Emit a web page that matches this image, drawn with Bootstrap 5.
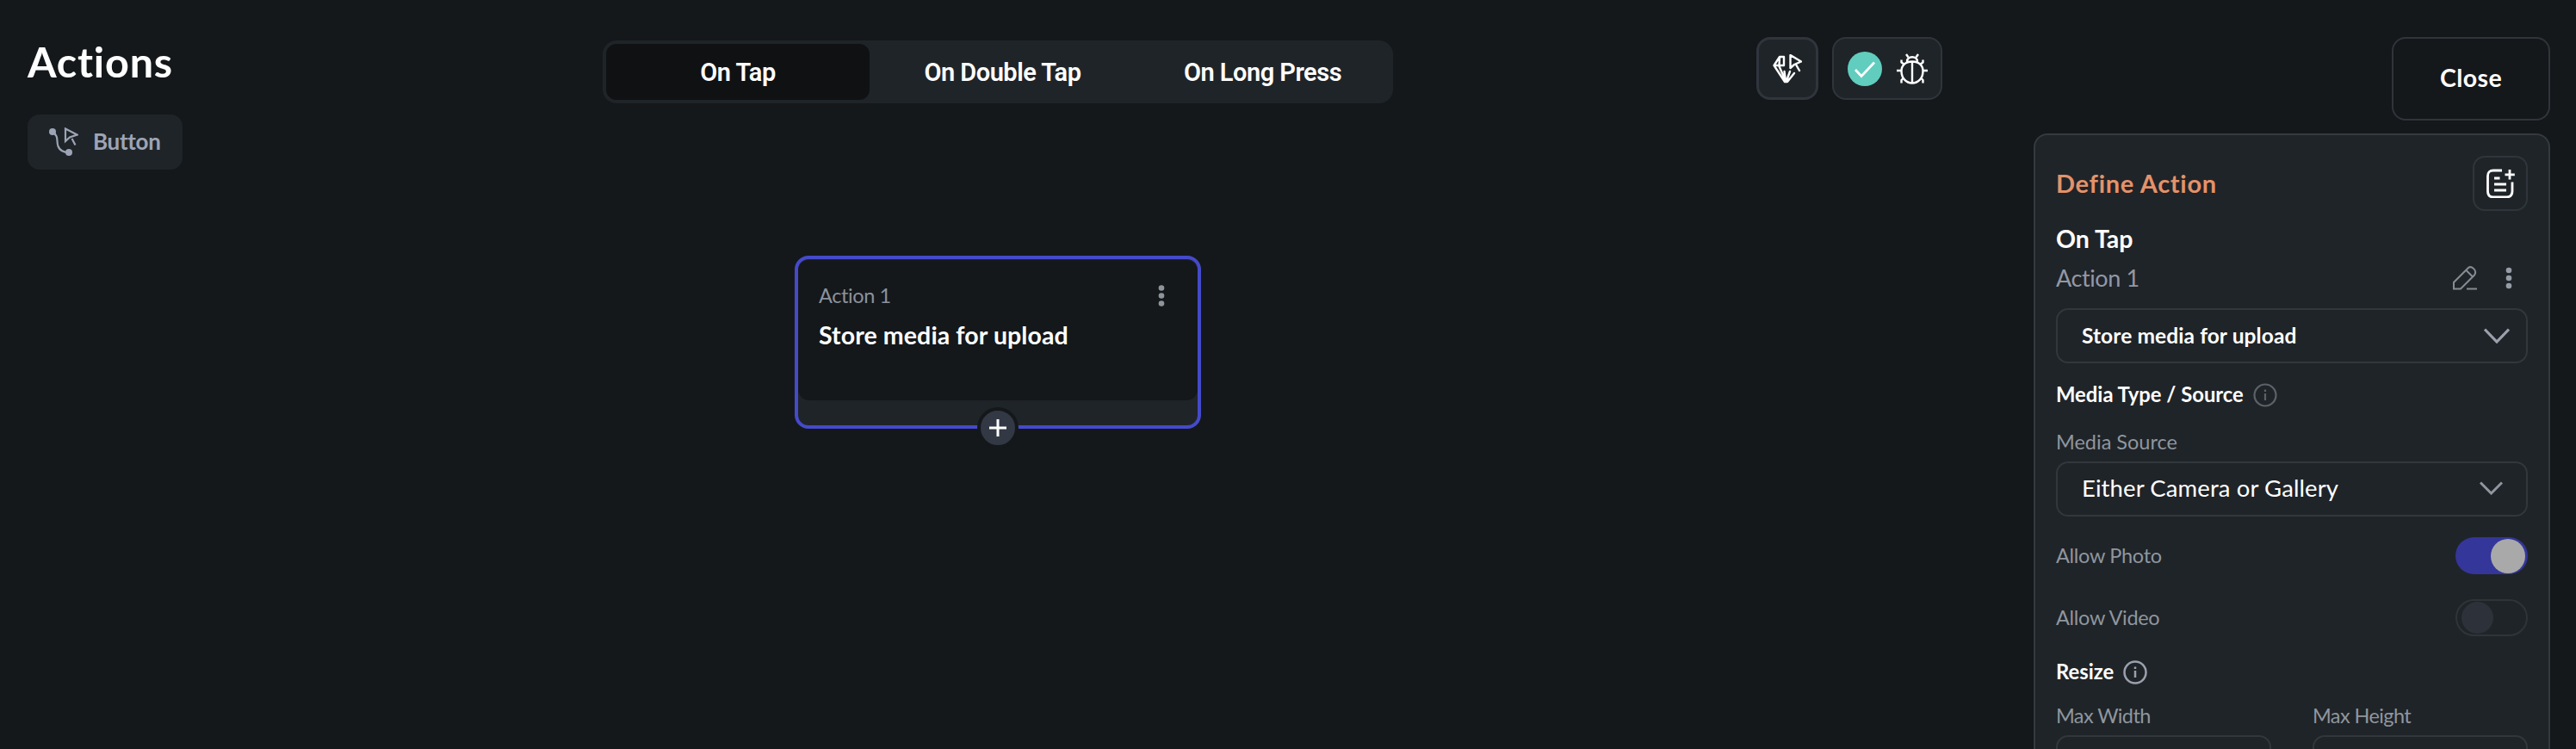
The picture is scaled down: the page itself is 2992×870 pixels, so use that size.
<!DOCTYPE html>
<html lang="en" data-bs-theme="dark">

<head>
    <meta charset="UTF-8">
    <meta name="viewport" content="width=device-width, initial-scale=1">
    <title>Actions</title>

    <!-- Bootstrap 5 -->
    <link href="https://cdn.jsdelivr.net/npm/bootstrap@5.3.0/dist/css/bootstrap.min.css" rel="stylesheet">
    <script src="https://cdn.jsdelivr.net/npm/bootstrap@5.3.0/dist/js/bootstrap.bundle.min.js"></script>

    <style>
        body {
            font-family: Lato, "Open Sans", sans-serif;
            background: #14181b;
            color: #fff;
            height: 870px;
            overflow: hidden;
        }

        svg {
            display: block;
            flex: none;
        }

        /* Main area */
        .workspace {
            width: 2318px;
        }

        .topbar {
            display: grid;
            grid-template-columns: 1fr 918px 1fr;
            height: 297px;
        }

        .page-title {
            margin: 46px 0 0 32px;
            font-size: 48.5px;
            line-height: 50px;
            font-weight: 700;
            letter-spacing: 0.8px;
        }

        .widget-chip {
            width: 180px;
            height: 64px;
            margin: 37px 0 0 32px;
            padding: 0 0 1px 25px;
            gap: 17px;
            border-radius: 14px;
            background: #1f2428;
            color: #9da4b6;
            font-size: 26px;
            font-weight: 700;
            letter-spacing: -0.3px;
        }

        .trigger-tabs {
            height: 73px;
            margin-top: 47px;
            padding: 4px;
            border-radius: 16px;
            background: #1f2428;
            font-family: Roboto, sans-serif;
            font-size: 29px;
            font-weight: 600;
            letter-spacing: -0.5px;
        }

        .trigger-tabs .nav-link {
            width: 309px;
            padding: 2px 0 0;
            border-radius: 12px;
            color: #fff;
        }

        .trigger-tabs .nav-link.active {
            width: 306px;
            background: #101113;
        }

        .trigger-tabs .nav-link:last-child {
            width: 295px;
        }

        .tools {
            margin: 43px 62px 0 0;
            gap: 16px;
        }

        .tool-box {
            height: 73px;
            border: 3px solid #30353d;
            border-radius: 16px;
            background: #1f2428;
        }

        .tool-box.single {
            width: 72px;
        }

        .tool-box.double {
            width: 128px;
            gap: 17px;
            border-width: 2px;
        }

        /* Action node */
        .action-node {
            width: 472px;
            height: 201px;
            border: 4px solid #454acb;
            border-radius: 16px;
            background: #1f2428;
        }

        .node-body {
            height: 163px;
            margin-top: 1px;
            padding: 23px 38px 0 24px;
            border-radius: 13px;
            background: #14181b;
        }

        .node-label {
            font-size: 23.5px;
            line-height: 37px;
            letter-spacing: -0.4px;
            color: #8b929b;
        }

        .node-name {
            font-size: 28.5px;
            line-height: 40px;
            margin-top: 7px;
            font-weight: 700;
            letter-spacing: 0.1px;
        }

        .add-node {
            left: 208px;
            top: 172px;
            width: 48px;
            height: 48px;
            border: 4px solid #14181b;
            border-radius: 50%;
            background: #323844;
        }

        /* Side panel */
        .side {
            width: 600px;
            margin-left: 44px;
        }

        .close-btn {
            flex: none;
            width: 184px;
            height: 97px;
            margin-top: 43px;
            padding: 0 0 2px;
            border: 2px solid #30353b;
            border-radius: 16px;
            font-size: 28.5px;
            font-weight: 700;
            letter-spacing: 0.4px;
            color: #fff;
        }

        .panel {
            flex: none;
            height: 715px;
            margin-top: 15px;
            padding: 24px 24px 0;
            border: 2px solid #353a3f;
            border-bottom: 0;
            border-radius: 16px 16px 0 0;
            background: #1f2428;
            overflow: hidden;
        }

        .panel-title {
            font-size: 29px;
            font-weight: 700;
            letter-spacing: 0.7px;
            color: #e4926a;
        }

        .add-doc {
            width: 64px;
            height: 64px;
            border: 2px solid #30353b;
            border-radius: 14px;
        }

        .trigger-name {
            margin-top: 10px;
            font-size: 28.5px;
            line-height: 45px;
            padding-bottom: 1px;
            font-weight: 700;
        }

        .action-name {
            height: 44px;
            padding-right: 18px;
            gap: 33px;
            font-size: 27px;
            letter-spacing: -0.4px;
            color: #9298a6;
        }

        .picker {
            height: 64px;
            padding: 0 19px 2px 28px;
            border: 2px solid #32373c;
            border-radius: 14px;
        }

        .action-picker {
            margin-top: 13px;
            padding-bottom: 0;
            font-size: 24.5px;
            font-weight: 700;
            letter-spacing: 0.1px;
        }

        .source-picker {
            margin-top: 7px;
            padding-right: 27px;
            font-size: 27.5px;
            letter-spacing: 0.1px;
        }

        .group-name {
            height: 40px;
            margin-top: 17px;
            padding-bottom: 1px;
            gap: 11px;
            font-size: 23.8px;
            font-weight: 700;
        }

        .field-name {
            font-size: 23.5px;
            line-height: 29px;
            padding-bottom: 1px;
            color: #8f969f;
        }

        .switch-row {
            height: 44px;
            letter-spacing: -0.3px;
        }

        .toggle {
            width: 84px;
            height: 43px;
            padding: 1px 3px;
            border-radius: 22px;
        }

        .toggle.on {
            background: #34369a;
        }

        .toggle.off {
            padding: 0 5px;
            border: 2px solid #2f3439;
        }

        .knob {
            width: 40px;
            height: 40px;
            border-radius: 50%;
            background: #a9a9a9;
        }

        .off .knob {
            width: 37px;
            height: 37px;
            background: #2d323a;
        }

        .size-label {
            letter-spacing: -0.6px;
        }

        .size-box {
            width: 250px;
            height: 64px;
            margin-top: 7px;
            border: 2px solid #32373c;
            border-radius: 14px;
        }
    </style>
</head>

<body class="d-flex">
    <main class="workspace">
        <div class="topbar">
            <div>
                <h1 class="page-title">Actions</h1>
                <div class="widget-chip d-flex align-items-center">
                    <svg width="34" height="34" viewBox="0 0 34 34" fill="none" stroke="#9da4b6" stroke-width="2.200">
                        <circle cx="4" cy="5" r="4" fill="#9da4b6" stroke="none"/>
                        <circle cx="23" cy="29" r="4" fill="#9da4b6" stroke="none"/>
                        <path d="M4 5C12 11 8 15 10.500 22C12.500 27 17 29 23 29M19 1.500V16L24 11.500L32.500 8.500ZM26.500 13L30.500 20.500"/>
                    </svg>
                    <span>Button</span>
                </div>
            </div>

            <nav class="trigger-tabs nav flex-nowrap">
                <a class="nav-link active d-flex align-items-center justify-content-center">On Tap</a>
                <a class="nav-link d-flex align-items-center justify-content-center">On Double Tap</a>
                <a class="nav-link d-flex align-items-center justify-content-center">On Long Press</a>
            </nav>

            <div class="tools d-flex justify-content-end">
                <div class="tool-box single d-flex align-items-center justify-content-center">
                    <svg width="34" height="34" viewBox="0 0 34 34" fill="none" stroke="#fff" stroke-width="2.400" stroke-linejoin="round" stroke-linecap="round">
                        <path d="M13 3H8L1.500 13L14 32H17L25 22M13 3V13M8 3.500L7.500 13M1.500 13H13M7.500 14L15 31L13.500 20M16 31L20 20"/>
                        <path d="M20.500 1V16L25 12L33 8.500ZM27 12L31 19"/>
                    </svg>
                </div>
                <div class="tool-box double d-flex align-items-center justify-content-center">
                    <svg width="40" height="40" viewBox="0 0 40 40" fill="none">
                        <circle cx="20" cy="20" r="20" fill="#61cdbe"/>
                        <path d="M9 21L16 28.500L31 12.500" stroke="#fff" stroke-width="2.800"/>
                    </svg>
                    <svg width="36" height="36" viewBox="0 0 36 36" fill="none" stroke="#fff" stroke-width="2.400" stroke-linejoin="round">
                        <path d="M18 9.500C26 9.500 30.500 14 30.500 20.500C30.500 29 25 34.500 18 34.500S5.500 29 5.500 20.500C5.500 14 10 9.500 18 9.500ZM18 9.500V34M12 9.500C12 2.500 24 2.500 24 9.500"/>
                        <path d="M13.500 4.500L11 1M22.500 4.500L25 1M8.500 12.500L5.500 10.500V7.500M27.500 12.500L30.500 10.500V7.500M5.500 20H0M30.500 20H36M8 28.500L5.500 31V34.500M28 28.500L30.500 31V34.500"/>
                    </svg>
                </div>
            </div>
        </div>

        <div class="d-flex justify-content-center">
            <div class="action-node position-relative">
                <div class="node-body d-flex justify-content-between">
                    <div>
                        <div class="node-label">Action 1</div>
                        <div class="node-name">Store media for upload</div>
                    </div>
                    <svg width="8" height="36" viewBox="0 0 8 36" fill="#8f949b">
                        <circle cx="4" cy="9.500" r="3.300"/>
                        <circle cx="4" cy="18.500" r="3.300"/>
                        <circle cx="4" cy="27.500" r="3.300"/>
                    </svg>
                </div>
                <div class="add-node position-absolute d-flex align-items-center justify-content-center">
                    <svg width="20" height="20" viewBox="0 0 20 20" stroke="#fff" stroke-width="3">
                        <path d="M10 0V20M0 10H20"/>
                    </svg>
                </div>
            </div>
        </div>
    </main>

    <aside class="side d-flex flex-column">
        <button class="close-btn btn align-self-end">Close</button>

        <section class="panel">
            <div class="d-flex align-items-center justify-content-between">
                <div class="panel-title">Define Action</div>
                <div class="add-doc d-flex align-items-center justify-content-center">
                    <svg width="34" height="34" viewBox="0 0 34 34" fill="none" stroke="#fff" stroke-width="2.800">
                        <path d="M19 2H9Q2.500 2 2.500 8.500V26Q2.500 33 9 33H24Q31 33 31 26V15.500"/>
                        <path d="M28 1V12.500M22.500 6.800H33.800M10 11H16.500M10 18H24M10 25H24"/>
                    </svg>
                </div>
            </div>

            <div class="trigger-name">On Tap</div>
            <div class="action-name d-flex align-items-center">
                <span class="me-auto">Action 1</span>
                <svg width="28" height="28" viewBox="0 0 28 28" fill="none" stroke="#868c93" stroke-width="2">
                    <path d="M1 26.500V19L17 3Q20 -0.500 23.500 2.500Q28 6 25 10.500L9 26.500ZM15.500 5L23 12.500M16 26.500H28"/>
                </svg>
                <svg width="8" height="26" viewBox="0 0 8 26" fill="#969ca6">
                    <circle cx="4" cy="4" r="3.300"/>
                    <circle cx="4" cy="13" r="3.300"/>
                    <circle cx="4" cy="22" r="3.300"/>
                </svg>
            </div>

            <div class="picker action-picker d-flex align-items-center justify-content-between">
                <span>Store media for upload</span>
                <svg width="30" height="18" viewBox="0 0 30 18" fill="none" stroke="#9aa1ad" stroke-width="3.200">
                    <path d="M1 1.500L15 16L29 1.500"/>
                </svg>
            </div>

            <div class="group-name d-flex align-items-center">
                <span>Media Type / Source</span>
                <svg width="28" height="28" viewBox="0 0 28 28" fill="none" stroke="#5c626a" stroke-width="2.200">
                    <circle cx="14" cy="14" r="12.500"/>
                    <path d="M14 12V20M14 7.500V10"/>
                </svg>
            </div>
            <div class="field-name" style="margin-top: 20px">Media Source</div>
            <div class="picker source-picker d-flex align-items-center justify-content-between">
                <span>Either Camera or Gallery</span>
                <svg width="27" height="16" viewBox="0 0 27 16" fill="none" stroke="#8f969f" stroke-width="3">
                    <path d="M1 1.500L13.500 14L26 1.500"/>
                </svg>
            </div>

            <div class="field-name switch-row mt-4 d-flex align-items-center justify-content-between">
                <span>Allow Photo</span>
                <div class="toggle on d-flex align-items-center justify-content-end"><div class="knob"></div></div>
            </div>
            <div class="field-name switch-row d-flex align-items-center justify-content-between" style="margin-top: 28px">
                <span>Allow Video</span>
                <div class="toggle off d-flex align-items-center"><div class="knob"></div></div>
            </div>

            <div class="group-name d-flex align-items-center" style="margin-top: 21px">
                <span>Resize</span>
                <svg width="28" height="28" viewBox="0 0 28 28" fill="none" stroke="#9aa1ad" stroke-width="2.500">
                    <circle cx="14" cy="14" r="12.500"/>
                    <path d="M14 12V20M14 7.500V10"/>
                </svg>
            </div>
            <div class="d-flex justify-content-between mt-3">
                <div>
                    <div class="field-name size-label">Max Width</div>
                    <div class="size-box"></div>
                </div>
                <div>
                    <div class="field-name size-label">Max Height</div>
                    <div class="size-box"></div>
                </div>
            </div>
        </section>
    </aside>
</body>
</html>
